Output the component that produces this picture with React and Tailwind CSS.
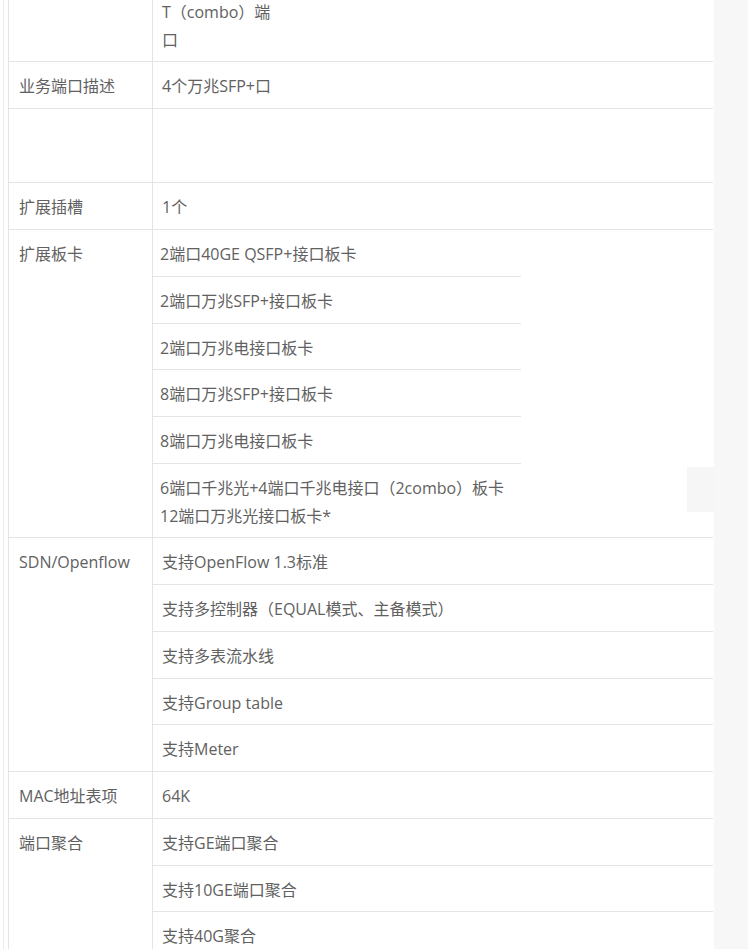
import React from "react";

const line = "border-[#e4e4e4]";
const text = "pt-[11px] pb-[7px] leading-[27.75px]";

const rows = [
  { label: "业务端口描述", items: ["4个万兆SFP+口"] },
  { label: "", items: [""], tall: true },
  { label: "扩展插槽", items: ["1个"] },
  {
    label: "扩展板卡",
    nested: true,
    items: [
      "2端口40GE QSFP+接口板卡",
      "2端口万兆SFP+接口板卡",
      "2端口万兆电接口板卡",
      "8端口万兆SFP+接口板卡",
      "8端口万兆电接口板卡",
      ["6端口千兆光+4端口千兆电接口（2combo）板卡", "12端口万兆光接口板卡*"],
    ],
  },
  {
    label: "SDN/Openflow",
    items: [
      "支持OpenFlow 1.3标准",
      "支持多控制器（EQUAL模式、主备模式）",
      "支持多表流水线",
      "支持Group table",
      "支持Meter",
    ],
  },
  { label: "MAC地址表项", items: ["64K"] },
  {
    label: "端口聚合",
    items: ["支持GE端口聚合", "支持10GE端口聚合", "支持40G聚合"],
  },
];

function SubRow({ value, last, nested, tall }) {
  const lines = Array.isArray(value) ? value : [value];
  return (
    <div
      className={`${text} ${nested ? "pl-[7px]" : "pl-[9px]"} ${
        last ? "" : `border-b ${line}`
      } ${tall ? "min-h-[73.5px]" : ""}`}
    >
      {lines.map((l, i) => (
        <div key={i} className="whitespace-nowrap">
          {l}
        </div>
      ))}
    </div>
  );
}

function Row({ label, items, nested, tall }) {
  return (
    <div className={`flex border-b ${line}`}>
      <div className={`w-[144px] shrink-0 border-r ${line} pl-[10px] ${text}`}>
        {label}
      </div>
      <div className="flex-1">
        <div className={nested ? "w-[368px]" : "w-full"}>
          {items.map((v, i) => (
            <SubRow
              key={i}
              value={v}
              nested={nested}
              tall={tall}
              last={i === items.length - 1}
            />
          ))}
        </div>
      </div>
    </div>
  );
}

export default function App() {
  return (
    <div className="relative flex w-[750px] h-[949px] overflow-hidden bg-white text-[16px] text-[#616161] font-['Open_Sans','Noto_Sans_CJK_SC',sans-serif]">
      <div className="w-[714px] shrink-0 flex">
        <div className="ml-[3px] w-[5px] border-l border-[#ececec]" />
        <div className={`w-[705px] border-l ${line}`}>
          {/* partly scrolled-off first row */}
          <div className={`flex h-[62px] border-b ${line}`}>
            <div className={`w-[144px] shrink-0 border-r ${line}`} />
            <div className="flex-1 pl-[9px] -mt-[2px] leading-[28px]">
              <div>T（combo）端</div>
              <div>口</div>
            </div>
          </div>
          {rows.map((r, i) => (
            <Row key={i} {...r} />
          ))}
        </div>
      </div>
      <div className="w-[34px] shrink-0 bg-[#f7f7f7]" />
      <div className="flex-1 bg-white" />

      {/* floating grey tab over the table edge */}
      <div className="absolute left-[687px] top-[467px] w-[27px] h-[45px] bg-[#f6f6f6]" />
    </div>
  );
}
